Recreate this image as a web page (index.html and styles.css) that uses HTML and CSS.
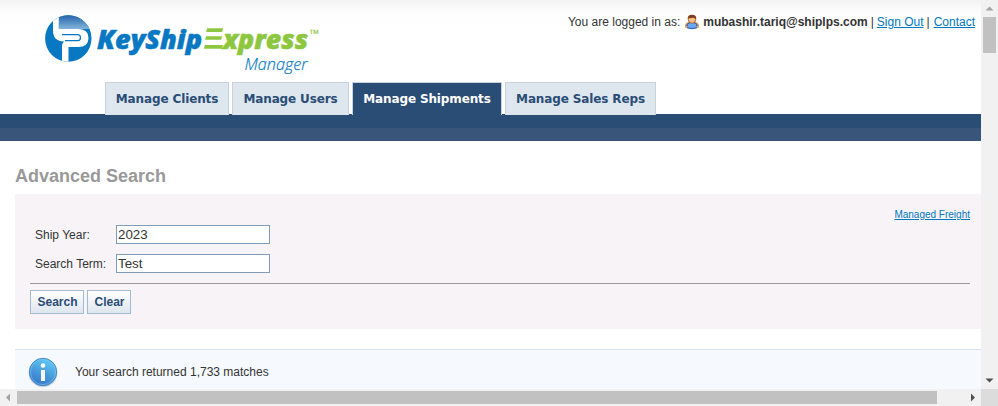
FILE: index.html
```html
<!DOCTYPE html>
<html lang="en">
<head>
<meta charset="utf-8">
<title>KeyShip Express Manager</title>
<link rel="stylesheet" href="styles.css">
</head>
<body>
<div class="window">
  <main class="page">
    <header class="header">
      <svg class="logo" width="290" height="70" viewBox="35 8 290 70" role="img" aria-label="KeyShip Express Manager">
        <defs>
          <linearGradient id="shine" x1="0" y1="0" x2="0" y2="1"><stop offset="0" stop-color="#1d5da6"/><stop offset="1" stop-color="#83b4dc"/></linearGradient>
          <clipPath id="disc"><circle cx="68.3" cy="38.5" r="23.2"/></clipPath>
        </defs>
        <g clip-path="url(#disc)">
          <rect x="45" y="15" width="47" height="47" fill="#0878c2"/>
          <path d="M59 14h33v15H59z" fill="url(#shine)"/>
          <path d="M53 14h5.800v15H78q10.500 0 10.500 9T78 47h-9.500v17H62V46q0-3 2-4.500Q53 41 53 31z" fill="#fff"/>
          <path d="M62 34.700h15.500q3 0 3 3t-3 3H65" fill="none" stroke="#0878c2" stroke-width="1.200"/>
        </g>
        <text class="brand key" x="97" y="48.600" textLength="105" lengthAdjust="spacingAndGlyphs">KeyShip</text>
        <path class="bars" d="M207 28.300h16l-.8 3.600h-16zM206 36.200h16l-.8 3.600h-16zM204.800 45h18l-.8 3.700h-18z"/>
        <text class="brand xpress" x="223" y="48.600" textLength="85" lengthAdjust="spacingAndGlyphs">xpress</text>
        <text class="tm" x="309.500" y="37.500" textLength="10" lengthAdjust="spacingAndGlyphs">™</text>
        <text class="manager" x="244.500" y="70" textLength="63" lengthAdjust="spacingAndGlyphs">Manager</text>
      </svg>
      <div class="account">
        <span>You are logged in as:</span>
        <svg class="user" width="16" height="16" viewBox="0 0 16 16">
          <path d="M1 13.500Q.5 8.500 5 8h6q4.500.5 4 5.500l-3 1H4z" fill="#d98c4c"/>
          <path d="M2.500 13.500q.5-4.500 3.500-5h4q3 .5 3.500 5-5.500 2.500-11 0z" fill="#6aa8f5" stroke="#235fc4"/>
          <ellipse cx="8" cy="5.500" rx="3.700" ry="3.800" fill="#f8bd82" stroke="#925026" stroke-width=".8"/>
          <path d="M3.800 5.500Q3 .8 8 .8t4.200 4.700Q11 3.800 9 3.800q-3 .8-4 0z" fill="#80401f"/>
          <path d="M1.500 12.500l1.500 1M14.500 12.500l-1.500 1" stroke="#f6b36f" stroke-width="2"/>
        </svg>
        <b>mubashir.tariq@shiplps.com</b>
        <span class="sep">|</span>
        <a href="#">Sign Out</a>
        <span class="sep">|</span>
        <a href="#">Contact</a>
      </div>
    </header>
    <nav class="tabs">
      <a class="tab clients"><span>Manage Clients</span></a>
      <a class="tab users"><span>Manage Users</span></a>
      <a class="tab shipments active"><span>Manage Shipments</span></a>
      <a class="tab reps"><span>Manage Sales Reps</span></a>
    </nav>
    <div class="band"></div>
    <section class="content">
      <h1>Advanced Search</h1>
      <form class="search">
        <a class="freight" href="#">Managed Freight</a>
        <div class="row"><label for="year">Ship Year:</label><input id="year" value="2023"></div>
        <div class="row"><label for="term">Search Term:</label><input id="term" value="Test"></div>
        <div class="rule"></div>
        <div class="buttons"><button class="go" type="button">Search</button><button class="clear" type="button">Clear</button></div>
      </form>
      <div class="notice">
        <svg width="32" height="32" viewBox="0 0 32 32">
          <defs><linearGradient id="info" x1=".7" y1="0" x2=".3" y2="1"><stop offset="0" stop-color="#62cbf5"/><stop offset="1" stop-color="#3372c6"/></linearGradient></defs>
          <circle cx="16" cy="17" r="14.300" fill="#cbd3df"/>
          <circle cx="16" cy="16" r="13.700" fill="url(#info)" stroke="#4a86c0"/>
          <circle cx="16" cy="16" r="12.600" fill="none" stroke="#7bc9f3" stroke-opacity=".6"/>
          <circle cx="16" cy="9.500" r="2.300" fill="#fff"/>
          <path d="M14 14h4v11h-4z" fill="#fff"/>
        </svg>
        <span>Your search returned 1,733 matches</span>
      </div>
    </section>
  </main>
  <div class="vbar">
    <svg width="17" height="17"><path d="M8.500 6.500l4 4h-8z" fill="#a3a3a3"/></svg>
    <div class="vthumb"></div>
    <svg class="down" width="17" height="17"><path d="M8.500 10.500l4-4h-8z" fill="#505050"/></svg>
  </div>
  <div class="hbar">
    <svg width="17" height="17"><path d="M6 8.500l4-4v8z" fill="#a3a3a3"/></svg>
    <div class="hthumb"></div>
    <svg class="right" width="17" height="17"><path d="M11 8.500l-4-4v8z" fill="#505050"/></svg>
  </div>
  <div class="corner"></div>
</div>
</body>
</html>
```

FILE: styles.css
```css
* { box-sizing: border-box; }
body { margin: 0; overflow: hidden; font: 12px "Liberation Sans", Arial, sans-serif; color: #333; }
a { color: #0077c0; }
.window { display: grid; grid-template: 389px 17px / 981px 17px; width: 998px; height: 406px; }
.page { overflow: hidden; background: linear-gradient(#f3f3f3, #fefefe 14px, #fff 30px); }
.header { display: flex; justify-content: space-between; height: 82px; padding: 8px 6px 0 35px; }
.logo { display: block; }
.brand { font: italic 800 27px "Open Sans", sans-serif; stroke-width: .5px; }
.key { fill: #0878c2; stroke: #0878c2; }
.xpress, .bars { fill: #8dc63f; }
.xpress { stroke: #8dc63f; }
.tm { font: bold 12px "Open Sans", sans-serif; fill: #8dc63f; }
.manager { font: italic 300 17px "Open Sans", sans-serif; fill: #0878c2; stroke: #0878c2; stroke-width: .2px; }
.account { display: flex; align-items: center; height: 28px; white-space: nowrap; }
.user { margin: 0 3px 0 4px; }
.account .sep { margin: 0 3px; }
.account .sep:last-of-type { margin-right: 4px; }
.tabs { display: flex; gap: 3px; height: 33px; margin-bottom: -1px; padding-left: 105px; position: relative; }
.tab { display: flex; justify-content: center; padding-top: 8px; background: #dee6ee; border: 1px solid #c8d2dd; border-bottom: 0; color: #2a4d76; font: bold 12px/16px "DejaVu Sans", Verdana, sans-serif; letter-spacing: -.13px; white-space: nowrap; }
.clients { width: 124px; }
.users { width: 117px; }
.shipments { width: 150px; }
.reps { width: 151px; }
.active { background: #2a4d76; color: #fff; }
.band { height: 27px; background: linear-gradient(#2a4d76 14px, #3a557a 14px); }
.content { padding-left: 15px; }
h1 { margin: 0; padding-top: 24px; height: 53px; font-size: 18px; line-height: 22px; color: #999; }
.search { display: flex; flex-direction: column; height: 135px; padding: 15px 11px 0 15px; background: #f7f3f7; }
.freight { align-self: flex-end; height: 16px; font-size: 10px; line-height: 12px; }
.row { display: flex; align-items: center; height: 19px; padding-left: 5px; margin-bottom: 10px; }
.row label { width: 81px; }
.row input { width: 154px; height: 19px; margin: 0; padding: 0 1px 0 1px; border: 1px solid #7f9db9; background: #fff; font: 13.333px "Liberation Sans", Arial, sans-serif; color: #333; }
.rule { height: 1px; background: #999; }
.buttons { display: flex; gap: 3px; margin-top: 6px; }
button { height: 24px; padding: 0 0 0 1px; border: 1px solid #a3bbd0; background: linear-gradient(#fff, #dee6ee); color: #2a4d76; font: bold 12px "Liberation Sans", Arial, sans-serif; }
.go { width: 54px; }
.clear { width: 44px; }
.notice { display: flex; align-items: center; gap: 17px; height: 44px; margin-top: 20px; padding-left: 12px; border-top: 1px solid #d3e2f5; background: #f6f9fe; }
.notice span { margin-left: -1px; }
.vbar { display: flex; flex-direction: column; background: #f1f1f1; }
.vthumb { width: 13px; height: 36px; margin-left: 2px; background: #c1c1c1; }
.down { margin-top: auto; }
.hbar { display: flex; background: #f1f1f1; }
.hthumb { width: 920px; height: 13px; margin-top: 2px; background: #c1c1c1; }
.right { margin-left: auto; }
.corner { background: #dcdcdc; }
svg { display: block; flex: none; }
```
